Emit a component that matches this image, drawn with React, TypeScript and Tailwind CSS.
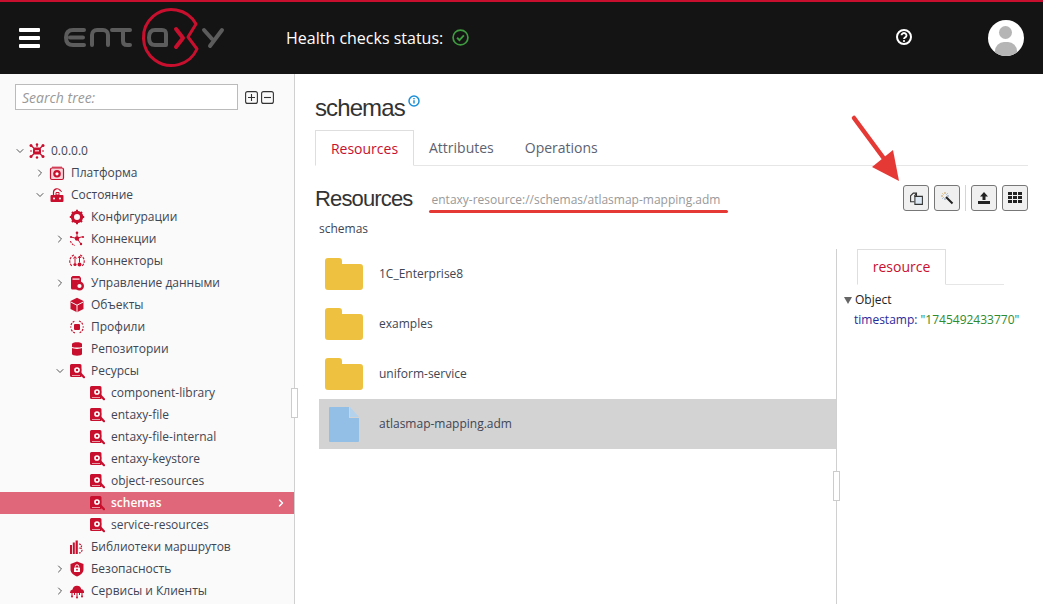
import React from 'react';
import { ChevronDown, ChevronRight } from 'lucide-react';

const RED = '#c8102e';

const IconBox: React.FC<{ children: React.ReactNode }> = ({ children }) => (
  <svg width="16" height="16" viewBox="0 0 16 16" fill="none" className="shrink-0">
    {children}
  </svg>
);

const NodeIcon = () => (
  <IconBox>
    <g stroke={RED} strokeWidth="1.2">
      <path d="M2 2.5 8 8M14 2.5 8 8M2 13.5 8 8M14 13.5 8 8M8 1v3M1 8h2M15 8h-2" />
    </g>
    <g fill={RED}>
      <rect x="4" y="4.5" width="8" height="7" rx="2" />
      <circle cx="2" cy="2.5" r="1.5" />
      <circle cx="14" cy="2.5" r="1.5" />
      <circle cx="2" cy="13.5" r="1.5" />
      <circle cx="14" cy="13.5" r="1.5" />
      <circle cx="8" cy="1.5" r="1.2" />
      <circle cx="8" cy="14.5" r="1.2" />
    </g>
    <rect x="6" y="7" width="4" height="1.5" fill="#fff" opacity=".7" />
  </IconBox>
);

const PlatformIcon = () => (
  <IconBox>
    <rect x="1.5" y="3" width="13" height="11.5" rx="1.5" stroke={RED} strokeWidth="1.2" fill="#f6d5da" />
    <circle cx="8" cy="8.8" r="3.8" fill={RED} />
    <circle cx="8" cy="8.8" r="1.6" fill="#fff" />
    <rect x="3" y="1.5" width="10" height="1.5" fill={RED} opacity=".6" />
  </IconBox>
);

const StateIcon = () => (
  <IconBox>
    <rect x="1.5" y="8" width="13" height="7" rx="1" fill={RED} />
    <path d="M4.5 8V5a3.5 3.5 0 0 1 6.5-1.5" stroke={RED} strokeWidth="1.2" />
    <path d="M11 2.5 12.5 5M7 5.5h3v2.5H7z" stroke={RED} strokeWidth="1" />
    <circle cx="5" cy="11.5" r="1" fill="#fff" />
    <circle cx="11" cy="11.5" r="1" fill="#fff" />
  </IconBox>
);

const GearIcon = () => (
  <IconBox>
    <circle cx="8" cy="8" r="4.6" stroke={RED} strokeWidth="3.2" />
    <path d="M8 .8v3M8 12.2v3M.8 8h3M12.2 8h3M3 3l2 2M11 11l2 2M13 3l-2 2M5 11l-2 2" stroke={RED} strokeWidth="2" />
  </IconBox>
);

const ConnectionIcon = () => (
  <IconBox>
    <circle cx="8" cy="7.5" r="2.2" fill={RED} />
    <circle cx="8" cy="1.8" r="1.3" fill={RED} />
    <circle cx="14" cy="6" r="1.1" fill={RED} />
    <circle cx="12" cy="13" r="1.2" fill={RED} />
    <circle cx="2" cy="6" r="1.1" fill={RED} />
    <path d="M8 2v5l5.5-1.2M8 7.5l4 5.5M8 7.5 2 6" stroke={RED} />
    <path d="M1.5 10a6 6 0 0 0 4.5 4.5" stroke={RED} strokeWidth="1.1" strokeDasharray="2 1" />
  </IconBox>
);

const ConnectorIcon = () => (
  <IconBox>
    <path d="M5 2a6.5 6.5 0 0 0-2 11M11 2a6.5 6.5 0 0 1 2 11" stroke={RED} strokeWidth="1.1" strokeDasharray="2.5 1" />
    <circle cx="6" cy="11.5" r="1.6" fill={RED} />
    <circle cx="10.5" cy="11.5" r="2" fill={RED} />
    <path d="M6 10V4M10.5 9.5V3M4.5 5.5 6 3.5l1.5 2M9 5l1.5-2L12 5" stroke={RED} strokeWidth="1" />
  </IconBox>
);

const DataIcon = () => (
  <IconBox>
    <path d="M2 2.5 3.5 1h7l1.5 2v4H8v7.5H3.5A1.5 1.5 0 0 1 2 13z" fill={RED} />
    <circle cx="10.5" cy="11" r="3.3" stroke={RED} strokeWidth="2.4" />
    <rect x="3.5" y="3.5" width="7" height="1.2" fill="#fff" />
  </IconBox>
);

const CubeIcon = () => (
  <IconBox>
    <path d="M8 .8 14.5 4v8L8 15.2 1.5 12V4z" fill={RED} />
    <path d="M1.8 5 8 8.2 14.2 5M8 8.2V15" stroke="#fafafa" strokeWidth="1" />
  </IconBox>
);

const ProfileIcon = () => (
  <IconBox>
    <rect x="5" y="5" width="6" height="6" rx="1" fill={RED} />
    <path d="M2 6a6.5 6.5 0 0 1 4-4M10 2a6.5 6.5 0 0 1 4 4M14 10a6.5 6.5 0 0 1-4 4M6 14a6.5 6.5 0 0 1-4-4" stroke={RED} strokeWidth="1.2" strokeDasharray="2 1" />
    <path d="M1 8h1.5M13.5 8H15" stroke={RED} strokeWidth="1.2" />
  </IconBox>
);

const RepoIcon = () => (
  <IconBox>
    <path d="M3 3C3 .8 13 .8 13 3v10c0 2.2-10 2.2-10 0z" fill={RED} />
    <path d="M3 6.5c2 1 8 1 10 0" stroke="#fafafa" strokeWidth="1.3" />
  </IconBox>
);

const ResourceIcon = () => (
  <IconBox>
    <path d="M1 2.5A1.5 1.5 0 0 1 2.5 1H11a1.5 1.5 0 0 1 1.5 1.5V14H2.5A1.5 1.5 0 0 1 1 12.5z" fill={RED} />
    <rect x="3" y="12" width="8" height="1" fill="#fafafa" opacity=".6" />
    <circle cx="8" cy="7" r="3.6" fill="#fff" stroke={RED} strokeWidth="1.5" />
    <circle cx="8" cy="7" r="1.2" fill={RED} />
    <path d="m10.8 9.8 4.2 4.4" stroke={RED} strokeWidth="2.2" strokeLinecap="round" />
  </IconBox>
);

const LibraryIcon = () => (
  <IconBox>
    <g fill={RED}>
      <rect x="1" y="6" width="2" height="9" />
      <rect x="3.8" y="3.5" width="2" height="11.5" />
      <rect x="6.6" y="1.5" width="2.2" height="13.5" />
    </g>
    <path d="M10 5c3 .5 3.5 2.5 1 4 3.5 1 2 4.5-1 5" stroke={RED} strokeWidth="1.2" strokeDasharray="2 1" />
  </IconBox>
);

const ShieldIcon = () => (
  <IconBox>
    <path d="M8 .5 14.5 3v5.5c0 3.2-3 5.7-6.5 7-3.5-1.3-6.5-3.8-6.5-7V3z" fill={RED} />
    <rect x="5" y="6.5" width="6" height="4.5" rx=".6" fill="#fff" />
    <path d="M6.3 6.5V5.5a1.7 1.7 0 0 1 3.4 0v1" stroke="#fff" strokeWidth="1" />
    <circle cx="8" cy="8.7" r=".9" fill={RED} />
  </IconBox>
);

const CloudIcon = () => (
  <IconBox>
    <path d="M1 9.5a3 3 0 0 1 2.5-3 4.5 4.5 0 0 1 8.8-.3A3 3 0 0 1 15 9.5V10H1z" fill={RED} />
    <path d="M3 10v3M8 10v4M13 10v3M5.5 10v2M10.5 10v2" stroke={RED} strokeWidth="1" />
    <circle cx="3" cy="13.5" r="1" fill={RED} />
    <circle cx="8" cy="14.5" r="1" fill={RED} />
    <circle cx="13" cy="13.5" r="1" fill={RED} />
  </IconBox>
);

type TreeRow = {
  label: string;
  level: number;
  icon: React.ReactNode;
  chevron?: 'open' | 'closed';
  active?: boolean;
};

const treeRows: TreeRow[] = [
  { label: '0.0.0.0', level: 0, icon: <NodeIcon />, chevron: 'open' },
  { label: 'Платформа', level: 1, icon: <PlatformIcon />, chevron: 'closed' },
  { label: 'Состояние', level: 1, icon: <StateIcon />, chevron: 'open' },
  { label: 'Конфигурации', level: 2, icon: <GearIcon /> },
  { label: 'Коннекции', level: 2, icon: <ConnectionIcon />, chevron: 'closed' },
  { label: 'Коннекторы', level: 2, icon: <ConnectorIcon /> },
  { label: 'Управление данными', level: 2, icon: <DataIcon />, chevron: 'closed' },
  { label: 'Объекты', level: 2, icon: <CubeIcon /> },
  { label: 'Профили', level: 2, icon: <ProfileIcon /> },
  { label: 'Репозитории', level: 2, icon: <RepoIcon /> },
  { label: 'Ресурсы', level: 2, icon: <ResourceIcon />, chevron: 'open' },
  { label: 'component-library', level: 3, icon: <ResourceIcon /> },
  { label: 'entaxy-file', level: 3, icon: <ResourceIcon /> },
  { label: 'entaxy-file-internal', level: 3, icon: <ResourceIcon /> },
  { label: 'entaxy-keystore', level: 3, icon: <ResourceIcon /> },
  { label: 'object-resources', level: 3, icon: <ResourceIcon /> },
  { label: 'schemas', level: 3, icon: <ResourceIcon />, active: true },
  { label: 'service-resources', level: 3, icon: <ResourceIcon /> },
  { label: 'Библиотеки маршрутов', level: 2, icon: <LibraryIcon /> },
  { label: 'Безопасность', level: 2, icon: <ShieldIcon />, chevron: 'closed' },
  { label: 'Сервисы и Клиенты', level: 2, icon: <CloudIcon />, chevron: 'closed' },
];

const levelPadding = ['pl-[14px]', 'pl-[34px]', 'pl-[54px]', 'pl-[74px]'];

const Tree: React.FC = () => (
  <div>
    {treeRows.map((row) => (
      <div
        key={row.label}
        className={`relative flex h-[22px] items-center ${levelPadding[row.level]} ${
          row.active ? 'bg-[#e0667a] font-semibold text-white' : 'text-[#404553]'
        }`}
      >
        <span className="flex w-[15px] shrink-0 justify-start">
          {row.chevron === 'open' && <ChevronDown size={12} strokeWidth={2} className="text-[#555]" />}
          {row.chevron === 'closed' && <ChevronRight size={12} strokeWidth={2} className="text-[#555]" />}
        </span>
        <span className="mr-[6px] flex w-[16px] justify-center">{row.icon}</span>
        <span className="whitespace-nowrap">{row.label}</span>
        {row.active && (
          <ChevronRight size={12} strokeWidth={3} className="absolute right-[7px] text-white" />
        )}
      </div>
    ))}
  </div>
);

const Logo = () => (
  <svg width="170" height="66" viewBox="0 0 170 66" fill="none">
    <path
      d="M140 20 132 33 141 45A28 28 0 1 1 140 20Z"
      stroke={RED}
      strokeWidth="3"
      strokeLinejoin="round"
    />
    <g stroke="#5c5c5c" strokeWidth="4" strokeLinecap="round" strokeLinejoin="round">
      <path d="M28 26H17C12 26 10 29 10 33.5S12 41 17 41H28M14 33.5H27" />
      <path d="M36 41V31C36 28 38 26 41 26H47C50 26 52 28 52 31V41" />
      <path d="M56 26H74M67 26V37C67 39.5 68.5 41 71 41H74" />
      <path d="M110 41H99C95 41 93 38 93 33.5S95 26 99 26H106C109 26 110 27 110 30V41" />
      <path d="M148 26 156 35M166 26 154 42" />
    </g>
    <path d="M120 25 127 34 120 43" stroke={RED} strokeWidth="4" strokeLinecap="round" strokeLinejoin="round" />
  </svg>
);

const ToolButton: React.FC<{ children: React.ReactNode }> = ({ children }) => (
  <button className="flex h-[26px] w-[26px] items-center justify-center rounded-[3px] border border-[#777] bg-[#f0f0f0]">
    {children}
  </button>
);

const FolderIcon = () => (
  <svg width="38" height="32" viewBox="0 0 38 32" className="shrink-0">
    <path
      d="M3 0h11a3 3 0 0 1 3 3v3h18a3 3 0 0 1 3 3v20a3 3 0 0 1-3 3H3a3 3 0 0 1-3-3V3a3 3 0 0 1 3-3z"
      fill="#eec141"
    />
  </svg>
);

const FileIcon = () => (
  <svg width="30" height="35" viewBox="0 0 30 35" className="shrink-0">
    <path d="M1 0h19v11h10v23a1 1 0 0 1-1 1H1a1 1 0 0 1-1-1V1a1 1 0 0 1 1-1z" fill="#93bfe6" />
    <path d="M21 0l9 10h-9z" fill="#b4d2ec" />
  </svg>
);

const files = ['1C_Enterprise8', 'examples', 'uniform-service'];

export default function App() {
  return (
    <div className="relative flex h-screen w-full flex-col overflow-hidden bg-white font-['Open_Sans',sans-serif] text-[12px]">
      {/* Шапка */}
      <header className="flex h-[74px] shrink-0 items-center border-t-2 border-[#c8102e] bg-[#141414] pl-[19px] text-white">
        <div className="flex w-[21px] flex-col gap-[4px]">
          <span className="h-[4px] rounded-[1px] bg-white" />
          <span className="h-[4px] rounded-[1px] bg-white" />
          <span className="h-[4px] rounded-[1px] bg-white" />
        </div>
        <div className="-mt-[2px] ml-[16px]">
          <Logo />
        </div>
        <div className="ml-[60px] flex items-center gap-[9px] text-[16px]">
          <span>Health checks status:</span>
          <svg width="17" height="17" viewBox="0 0 16 16" fill="none" className="-mt-[2px]">
            <circle cx="8" cy="8" r="7" stroke="#3f9b3f" strokeWidth="1.6" />
            <path d="m4.8 8.2 2.2 2.2 4.2-4.4" stroke="#3f9b3f" strokeWidth="1.8" />
          </svg>
        </div>
        <svg width="16" height="16" viewBox="0 0 16 16" fill="none" className="-mt-[2px] ml-[427px]">
          <circle cx="8" cy="8" r="7" stroke="#fff" strokeWidth="2" />
          <path d="M5.5 6.3a2.5 2.3 0 1 1 3.8 2C8.4 8.9 8 9.2 8 10" stroke="#fff" strokeWidth="1.9" />
          <circle cx="8" cy="12" r="1.1" fill="#fff" />
        </svg>
        <div className="relative ml-[76px] h-[36px] w-[36px] overflow-hidden rounded-full bg-white">
          <span className="absolute left-[11px] top-[6px] h-[13px] w-[13px] rounded-full bg-[#b5b5b5]" />
          <span className="absolute left-[7px] top-[22px] h-[20px] w-[22px] rounded-t-[9px] bg-[#b5b5b5]" />
        </div>
      </header>

      <div className="flex min-h-0 flex-1">
        {/* Боковая панель */}
        <aside className="relative w-[295px] shrink-0 overflow-hidden border-r border-[#d0d0d0] bg-[#fafafa]">
          <div className="flex items-center pl-[15px] pt-[10px]">
            <input
              readOnly
              placeholder="Search tree:"
              className="h-[26px] w-[223px] border border-[#bbb] bg-white px-[6px] text-[14px] italic outline-none placeholder:text-[#999]"
            />
            <svg width="13" height="13" viewBox="0 0 13 13" fill="none" className="ml-[7px]">
              <rect x=".6" y=".6" width="11.8" height="11.8" rx="2" stroke="#333" strokeWidth="1.1" />
              <path d="M3 6.5h7M6.5 3v7" stroke="#333" strokeWidth="1.1" />
            </svg>
            <svg width="13" height="13" viewBox="0 0 13 13" fill="none" className="ml-[3px]">
              <rect x=".6" y=".6" width="11.8" height="11.8" rx="2" stroke="#333" strokeWidth="1.1" />
              <path d="M3 6.5h7" stroke="#333" strokeWidth="1.1" />
            </svg>
          </div>
          <div className="pt-[30px]">
            <Tree />
          </div>
        </aside>

        {/* Основной контент */}
        <main className="flex min-w-0 flex-1 flex-col pl-[20px] pr-[15px]">
          <div className="flex h-[56px] items-start pt-[17px]">
            <h1 className="font-['Liberation_Sans',sans-serif] text-[24px] leading-[33px] tracking-[-0.9px] text-[#333]">
              schemas
            </h1>
            <svg width="12" height="12" viewBox="0 0 12 12" fill="none" className="ml-[3px] mt-[4px]">
              <circle cx="6" cy="6" r="5" stroke="#1a8fd8" strokeWidth="1.5" />
              <path d="M6 5.2v3.4M6 3v1.2" stroke="#1a8fd8" strokeWidth="1.5" />
            </svg>
          </div>
          <nav className="flex h-[36px] shrink-0 border-b border-[#e6e6e6] text-[14px]">
            <span className="-mb-px flex h-[36px] w-[99px] items-center justify-center border border-b-white border-[#dedede] text-[#c8102e]">
              Resources
            </span>
            <span className="flex items-center pl-[15px] pr-[15px] text-[#5d6270]">Attributes</span>
            <span className="flex items-center pl-[16px] text-[#5d6270]">Operations</span>
          </nav>
          <div className="flex h-[50px] shrink-0 items-center pt-[14px]">
            <h2 className="font-['Liberation_Sans',sans-serif] text-[22px] tracking-[-0.85px] text-[#333]">Resources</h2>
            <span className="ml-[19px] mt-[3px] text-[12px] text-[#999]">
              entaxy-resource://schemas/atlasmap-mapping.adm
            </span>
            <div className="ml-auto flex items-center gap-[5px]">
              <ToolButton>
                <svg width="15" height="15" viewBox="0 0 14 14" fill="none" stroke="#333" strokeWidth="1">
                  <path d="M5 10H1.5V4.5L4 2h3v3" />
                  <path d="M5.5 5H9l3.5 0v7.5h-7z" fill="#dce9f5" />
                  <path d="M7 2 5 5" />
                </svg>
              </ToolButton>
              <ToolButton>
                <svg width="14" height="14" viewBox="0 0 14 14" fill="none">
                  <path d="m6 6 6.5 6.5" stroke="#222" strokeWidth="2" />
                  <path d="M5 1v2M1 5h2M2.5 2.5l1 1" stroke="#c9a15a" strokeWidth="1" />
                  <path d="M5 7v2M7 5h2M7.5 2.5l-1 1M2.5 7.5l1-1" stroke="#7d97b5" strokeWidth="1" />
                </svg>
              </ToolButton>
              <span className="h-[26px] w-px bg-[#d5d5d5]" />
              <ToolButton>
                <svg width="14" height="14" viewBox="0 0 14 14" fill="#222">
                  <path d="M7 1 11 5.5H8.5V9h-3V5.5H3z" />
                  <rect x="1" y="10" width="12" height="3" />
                </svg>
              </ToolButton>
              <ToolButton>
                <svg width="14" height="12" viewBox="0 0 14 12" fill="#222">
                  <rect x="0" y="0" width="4" height="3" />
                  <rect x="5" y="0" width="4" height="3" />
                  <rect x="10" y="0" width="4" height="3" />
                  <rect x="0" y="4" width="4" height="3" />
                  <rect x="5" y="4" width="4" height="3" />
                  <rect x="10" y="4" width="4" height="3" />
                  <rect x="0" y="8" width="4" height="3" />
                  <rect x="5" y="8" width="4" height="3" />
                  <rect x="10" y="8" width="4" height="3" />
                </svg>
              </ToolButton>
            </div>
          </div>
          <div className="mb-[7px] flex h-[26px] shrink-0 items-center pl-[4px] text-[#404553]">schemas</div>

          <div className="flex min-h-0 flex-1">
            <div className="relative w-[522px] shrink-0 border-r border-[#d0d0d0] pl-[4px]">
              {files.map((name) => (
                <div key={name} className="flex h-[50px] items-center pl-[6px] text-[#404553]">
                  <FolderIcon />
                  <span className="ml-[16px]">{name}</span>
                </div>
              ))}
              <div className="flex h-[50px] items-center bg-[#d3d3d3] pl-[10px] text-[#404553]">
                <FileIcon />
                <span className="ml-[20px]">atlasmap-mapping.adm</span>
              </div>
            </div>
            <div className="w-[167px] shrink-0 pl-[20px]">
              <div className="flex h-[36px] border-b border-[#e6e6e6]">
                <span className="-mb-px flex h-[36px] w-[89px] items-center justify-center border border-b-white border-[#dedede] pb-[2px] text-[14px] text-[#c8102e]">
                  resource
                </span>
              </div>
              <div className="-ml-[13px] mt-[5px] w-[200px] leading-[20px]">
                <div className="flex items-center text-[#222]">
                  <svg width="8" height="8" viewBox="0 0 8 8" className="mr-[3px]">
                    <path d="M0 1h8L4 8z" fill="#666" />
                  </svg>
                  Object
                </div>
                <div className="pl-[10px]">
                  <span className="text-[#2a2a9b]">timestamp:</span>{' '}
                  <span className="text-[#2e8b2e]">"1745492433770"</span>
                </div>
              </div>
            </div>
          </div>
        </main>
      </div>

      {/* Ручки разделителей */}
      <span className="absolute left-[291px] top-[388px] h-[30px] w-[7px] border border-[#ccc] bg-white" />
      <span className="absolute left-[833px] top-[471px] h-[30px] w-[7px] border border-[#ccc] bg-white" />

      {/* Пометки поверх скриншота */}
      <span className="absolute left-[429px] top-[210px] h-[3px] w-[299px] rounded-full bg-[#e53935]" />
      <svg width="70" height="80" viewBox="0 0 70 80" fill="none" className="absolute left-[840px] top-[110px]">
        <path d="M14 8 48 54" stroke="#e53935" strokeWidth="4.5" strokeLinecap="round" />
        <path d="M59 71 53 40 32 57z" fill="#e53935" />
      </svg>
    </div>
  );
}
